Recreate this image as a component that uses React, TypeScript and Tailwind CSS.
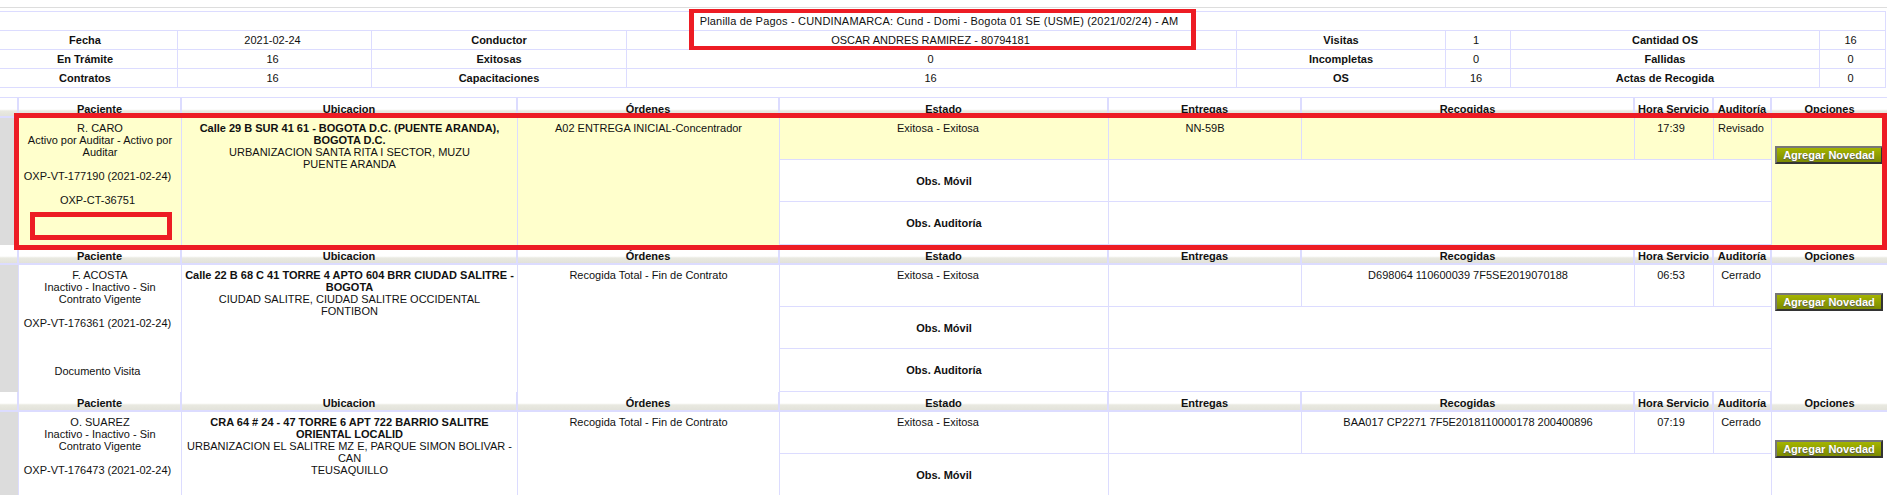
import React from "react";

const summary = [
  ["Fecha", "2021-02-24", "Conductor", "OSCAR ANDRES RAMIREZ - 80794181", "Visitas", "1", "Cantidad OS", "16"],
  ["En Trámite", "16", "Exitosas", "0", "Incompletas", "0", "Fallidas", "0"],
  ["Contratos", "16", "Capacitaciones", "16", "OS", "16", "Actas de Recogida", "0"],
];

const summaryCell = [
  "font-bold pr-[7px]",
  "pr-[4px]",
  "font-bold",
  "pr-[2px]",
  "font-bold",
  "pr-[4px]",
  "font-bold",
  "pr-[4px]",
];

const heads = ["Paciente", "Ubicacion", "Órdenes", "Estado", "Entregas", "Recogidas", "Hora Servicio", "Auditoría", "Opciones"];

const COLS = "grid grid-cols-[19px_163px_336px_262px_329px_193px_333px_79px_58px_115px]";

type Row = {
  yellow: boolean;
  name: string;
  state: string[];
  oxp: string;
  extra?: React.ReactNode;
  bold: string[];
  addr: string[];
  order: string;
  entregas: string;
  recogidas: string;
  hora: string;
  audit: string;
};

const rows: Row[] = [
  {
    yellow: true,
    name: "R. CARO",
    state: ["Activo por Auditar - Activo por", "Auditar"],
    oxp: "OXP-VT-177190 (2021-02-24)",
    extra: <div className="mt-[12px] pr-[5px]">OXP-CT-36751</div>,
    bold: ["Calle 29 B SUR 41 61 - BOGOTA D.C. (PUENTE ARANDA),", "BOGOTA D.C."],
    addr: ["URBANIZACION SANTA RITA I SECTOR, MUZU", "PUENTE ARANDA"],
    order: "A02 ENTREGA INICIAL-Concentrador",
    entregas: "NN-59B",
    recogidas: "",
    hora: "17:39",
    audit: "Revisado",
  },
  {
    yellow: false,
    name: "F. ACOSTA",
    state: ["Inactivo - Inactivo - Sin", "Contrato Vigente"],
    oxp: "OXP-VT-176361 (2021-02-24)",
    extra: <div className="mt-[36px] pr-[5px]">Documento Visita</div>,
    bold: ["Calle 22 B 68 C 41 TORRE 4 APTO 604 BRR CIUDAD SALITRE -", "BOGOTA"],
    addr: ["CIUDAD SALITRE, CIUDAD SALITRE OCCIDENTAL", "FONTIBON"],
    order: "Recogida Total - Fin de Contrato",
    entregas: "",
    recogidas: "D698064 110600039 7F5SE2019070188",
    hora: "06:53",
    audit: "Cerrado",
  },
  {
    yellow: false,
    name: "O. SUAREZ",
    state: ["Inactivo - Inactivo - Sin", "Contrato Vigente"],
    oxp: "OXP-VT-176473 (2021-02-24)",
    bold: ["CRA 64 # 24 - 47 TORRE 6 APT 722 BARRIO SALITRE", "ORIENTAL LOCALID"],
    addr: ["URBANIZACION EL SALITRE MZ E, PARQUE SIMON BOLIVAR -", "CAN", "TEUSAQUILLO"],
    order: "Recogida Total - Fin de Contrato",
    entregas: "",
    recogidas: "BAA017 CP2271 7F5E2018110000178 200400896",
    hora: "07:19",
    audit: "Cerrado",
  },
];

function Lines({ items }: { items: string[] }) {
  return (
    <>
      {items.map((t) => (
        <div key={t} className="whitespace-nowrap">
          {t}
        </div>
      ))}
    </>
  );
}

function HeaderRow() {
  return (
    <div className={`${COLS} h-[20px]`}>
      <div className="border-r-2 border-b-2 border-[#dcdcff] bg-[linear-gradient(#ffffff_62%,#e9e9e1_72%,#e2e2da_100%)]" />
      {heads.map((h) => (
        <div
          key={h}
          className="border-r-2 last:border-r-0 border-b-2 border-[#dcdcff] bg-[linear-gradient(#ffffff_62%,#e9e9e1_72%,#e2e2da_100%)] pt-[5px] text-center font-bold whitespace-nowrap"
        >
          {h}
        </div>
      ))}
    </div>
  );
}

function DataRow({ r }: { r: Row }) {
  const fill = r.yellow ? "bg-[#ffffcc]" : "bg-white";
  const cell = `${fill} border-r border-[#dcdcff] pt-[4px] text-center`;
  const top = `${cell} border-b`;
  return (
    <div className={`${COLS} grid-rows-[42px_42px_43px] h-[127px]`}>
      <div className="row-span-3 bg-[#dcdcdc] border-r border-[#dcdcff]" />
      <div className={`${cell} row-span-3`}>
        <div>{r.name}</div>
        <Lines items={r.state} />
        <div className="mt-[12px] pr-[5px] whitespace-nowrap">{r.oxp}</div>
        {r.extra}
      </div>
      <div className={`${cell} row-span-3`}>
        <div className="font-bold">
          <Lines items={r.bold} />
        </div>
        <Lines items={r.addr} />
      </div>
      <div className={`${cell} row-span-3`}>{r.order}</div>
      <div className={`${top} pr-[12px]`}>Exitosa - Exitosa</div>
      <div className={top}>{r.entregas}</div>
      <div className={top}>{r.recogidas}</div>
      <div className={`${top} pr-[6px]`}>{r.hora}</div>
      <div className={`${top} pr-[3px]`}>{r.audit}</div>
      <div className={`${fill} row-span-3 pt-[28px] pl-[3px]`}>
        <button className="block w-[108px] h-[18px] border-2 border-t-[#777777] border-l-[#777777] border-r-[#333333] border-b-[#333333] bg-[linear-gradient(#a4b400,#7c8b00)] text-white font-bold text-[11px] leading-[12px] [text-shadow:0_1px_1px_#555555]">
          Agregar Novedad
        </button>
      </div>
      <div className="col-start-5 flex items-center justify-center border-r border-b border-[#dcdcff] bg-white font-bold">
        Obs. Móvil
      </div>
      <div className="col-span-4 border-r border-b border-[#dcdcff] bg-white" />
      <div className="col-start-5 flex items-center justify-center border-r border-b border-[#dcdcff] bg-white font-bold">
        Obs. Auditoría
      </div>
      <div className="col-span-4 border-r border-b border-[#dcdcff] bg-white" />
    </div>
  );
}

export default function App() {
  return (
    <div className="relative w-[1887px] h-[495px] overflow-hidden bg-white text-[#111111] text-[11px] leading-[12px] font-['Liberation_Sans',Arial,sans-serif]">
      <div className="pt-[7px]">
        <div className="h-px bg-[#dddddd]" />
      </div>
      <div className="mt-[3px] w-[1886px] border-t border-[#dcdcff]">
        <div className="h-[19px] border-b border-r border-[#dcdcff] pt-[3px] pr-[7px] text-center tracking-[0.18px]">
          Planilla de Pagos - CUNDINAMARCA: Cund - Domi - Bogota 01 SE (USME) (2021/02/24) - AM
        </div>
        {summary.map((row) => (
          <div
            key={row[0]}
            className="grid grid-cols-[178px_194px_255px_610px_209px_65px_309px_66px] h-[19px]"
          >
            {row.map((c, i) => (
              <div
                key={i}
                className={`border-r border-b border-[#dcdcff] pt-[3px] text-center ${summaryCell[i]}`}
              >
                {c}
              </div>
            ))}
          </div>
        ))}
      </div>
      <div className="mt-[9px] border-t border-[#dcdcff]">
        {rows.map((r) => (
          <div key={r.name}>
            <HeaderRow />
            <DataRow r={r} />
          </div>
        ))}
      </div>

      <div className="absolute left-[689px] top-[9px] w-[507px] h-[41px] border-x-[5px] border-y-[4px] border-[#ed1c24]" />
      <div className="absolute left-[14px] top-[113px] w-[1873px] h-[137px] border-[5px] border-[#ed1c24]" />
      <div className="absolute left-[30px] top-[212px] w-[142px] h-[28px] border-[5px] border-[#ed1c24]" />
    </div>
  );
}
